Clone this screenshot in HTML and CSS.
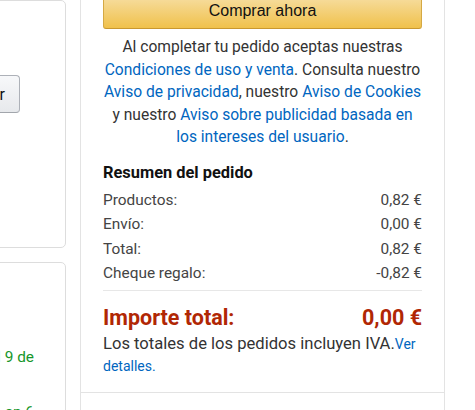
FILE: index.html
```html
<!DOCTYPE html>
<html lang="es">
<head>
<meta charset="utf-8">
<title>Resumen del pedido</title>
<link rel="stylesheet" href="styles.css">
</head>
<body>
<div class="page">
  <div class="left">
    <div class="card card-top">
      <div class="btn-row"><button class="btn-sec">Continuar</button></div>
    </div>
    <div class="card card-bottom">
      <div class="green-row"><span>Llega el 9 de</span></div>
      <div class="green-row green-row-2"><span>Entrega en 6</span></div>
    </div>
  </div>
  <div class="right">
    <div class="box">
      <button class="btn-buy">Comprar ahora</button>
      <p class="terms">Al completar tu pedido aceptas nuestras <a href="#">Condiciones de uso y venta</a>. Consulta nuestro <a href="#">Aviso de privacidad</a>, nuestro <a href="#">Aviso de Cookies</a> y nuestro <a href="#">Aviso sobre publicidad basada en los intereses del usuario</a>.</p>
      <h3 class="sum-title">Resumen del pedido</h3>
      <div class="row"><span>Productos:</span><span>0,82 €</span></div>
      <div class="row"><span>Envío:</span><span>0,00 €</span></div>
      <div class="row"><span>Total:</span><span>0,82 €</span></div>
      <div class="row"><span>Cheque regalo:</span><span>-0,82 €</span></div>
      <div class="total-row"><span>Importe total:</span><span>0,00 €</span></div>
      <p class="vat">Los totales de los pedidos incluyen IVA.<a href="#">Ver detalles.</a></p>
    </div>
    <div class="box-next"></div>
  </div>
</div>
</body>
</html>
```
FILE: styles.css
```css
html, body {
  margin: 0;
  padding: 0;
  background: #fff;
}
body {
  width: 475px;
  height: 410px;
  overflow: hidden;
  font-family: Roboto, "Liberation Sans", Arial, sans-serif;
  color: #333;
}
.page {
  display: flex;
  align-items: flex-start;
  gap: 14px;
}
.left {
  width: 80px;
  margin-left: -14px;
  flex: none;
  display: flex;
  flex-direction: column;
  gap: 14px;
}
.card {
  border: 1px solid #dddddd;
  border-radius: 5px;
  box-sizing: border-box;
}
.card-top {
  height: 248px;
}
.card-bottom {
  height: 200px;
}
.btn-row {
  display: flex;
  justify-content: flex-end;
  width: 33px;
  margin-top: 74px;
}
.btn-sec {
  flex: none;
  height: 38px;
  padding: 0 14px 0 14px;
  font-family: inherit;
  font-size: 16px;
  color: #111;
  background: linear-gradient(#f7f8fa, #e7e9ec);
  border: 1px solid #adb1b8;
  border-bottom-color: #a2a6ac;
  border-radius: 4px;
  white-space: nowrap;
}
.green-row {
  display: flex;
  justify-content: flex-end;
  width: 47px;
  margin-top: 83px;
  font-size: 15.4px;
  line-height: 22px;
  color: #16962a;
  white-space: nowrap;
}
.green-row span {
  flex: none;
}
.green-row-2 {
  margin-top: 33px;
}
.right {
  width: 365px;
  flex: none;
  margin-top: -10px;
}
.box {
  border: 1px solid #e3e3e3;
  padding: 3px 22px 15px;
}
.box-next {
  height: 40px;
  border: 1px solid #e3e3e3;
  border-top: none;
}
.btn-buy {
  display: block;
  width: 100%;
  height: 35px;
  margin: 0;
  padding: 0 0 2px;
  font-family: "Liberation Sans", Arial, sans-serif;
  font-size: 16px;
  color: #111;
  background: linear-gradient(#f7dfa5, #f0c14b);
  border: 1px solid #d5a944;
  border-bottom-color: #c9982f;
  border-radius: 3px;
}
.terms {
  margin: 7px 0 0;
  text-align: center;
  font-size: 15.6px;
  line-height: 22.5px;
  color: #333;
}
a {
  color: #0066c0;
  text-decoration: none;
}
.sum-title {
  margin: 12px 0 3px;
  font-size: 16.4px;
  line-height: 24px;
  font-weight: 700;
  color: #111;
}
.row {
  display: flex;
  justify-content: space-between;
  font-size: 15.4px;
  line-height: 24.5px;
  color: #444;
}
.total-row {
  display: flex;
  justify-content: space-between;
  margin-top: 4px;
  padding-top: 14px;
  border-top: 1px solid #e7e7e7;
  font-size: 21.5px;
  line-height: 26px;
  font-weight: 700;
  color: #b12704;
}
.vat {
  margin: 2px 0 0;
  font-size: 16.6px;
  line-height: 22px;
  color: #333;
}
.vat a {
  font-size: 14px;
}
```
